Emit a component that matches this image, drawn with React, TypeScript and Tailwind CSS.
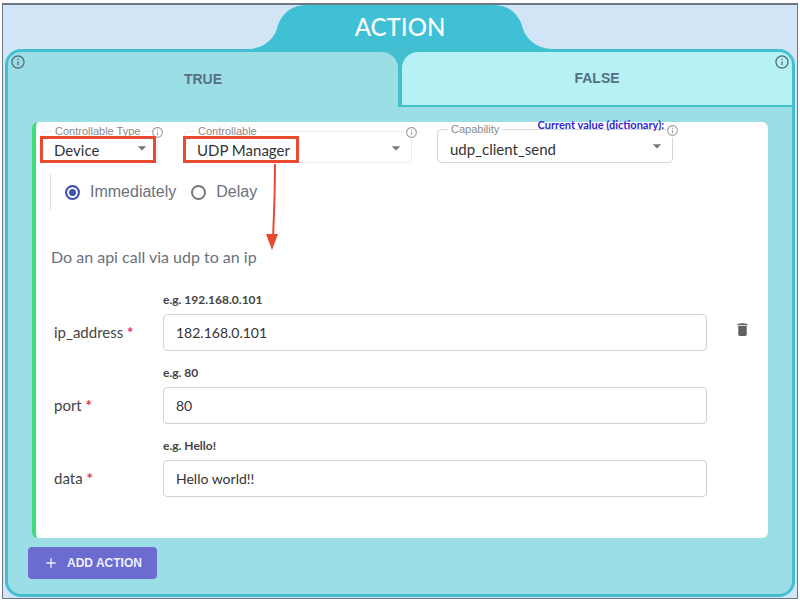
import { useState } from "react";
import type { ReactNode } from "react";
import { MdAdd, MdArrowDropDown, MdDelete, MdInfoOutline } from "react-icons/md";

type SelectFieldProps = {
  id: string;
  label: string;
  value: string;
  className: string;
  children?: ReactNode;
};

function SelectField({ id, label, value, className, children }: SelectFieldProps) {
  return (
    <div className={`relative rounded border ${className}`}>
      <label
        htmlFor={id}
        className="absolute -top-[7px] left-2.5 bg-white px-[3px] font-['Liberation_Sans',sans-serif] text-[11px] leading-3 whitespace-nowrap text-[#8a8a8a]"
      >
        {label}
      </label>
      <select
        id={id}
        defaultValue={value}
        className="h-full w-full appearance-none bg-transparent pt-1.5 pl-3 text-[15px] text-[#333] outline-none"
      >
        <option>{value}</option>
      </select>
      <MdArrowDropDown className="pointer-events-none absolute top-1.5 right-[5px] size-5 text-[#757575]" />
      <button
        type="button"
        aria-label={`About ${label}`}
        className="absolute -top-1.5 -right-[7px] rounded-full bg-white text-[#a3a3a3]"
      >
        <MdInfoOutline className="size-[13px]" />
      </button>
      {children}
    </div>
  );
}

function Highlight() {
  return (
    <div className="pointer-events-none absolute -bottom-px -left-0.5 h-[27px] w-[116px] border-3 border-[#e8492f]" />
  );
}

function Flare({ className }: { className?: string }) {
  return (
    <svg viewBox="0 0 56 44" className={`h-11 w-14 ${className ?? ""}`} aria-hidden="true">
      <path d="M0 44 C16 43 25 33 28 24 C31 11 41 0 57 0 V44 Z" fill="#3fc0d5" />
    </svg>
  );
}

const params = [
  { name: "ip_address", hint: "e.g. 192.168.0.101", value: "182.168.0.101" },
  { name: "port", hint: "e.g. 80", value: "80" },
  { name: "data", hint: "e.g. Hello!", value: "Hello world!!" },
];

export default function App() {
  const [timing, setTiming] = useState("Immediately");

  return (
    <div className="bg-white px-0.5 py-[3px] font-['Lato',sans-serif]">
      <main className="border border-t-2 border-[#6b7a86] bg-[#d1e5f6] px-0.5 pb-px">
        <header className="flex h-11 justify-center">
          <Flare />
          <h1 className="w-[190px] bg-[#3fc0d5] text-center text-2xl leading-11 font-medium text-white">
            ACTION
          </h1>
          <Flare className="-scale-x-100" />
        </header>

        <section className="overflow-hidden rounded-2xl border-3 border-[#43bfce] bg-[#9bdee5]">
          <div
            role="tablist"
            className="grid grid-cols-2 gap-1 bg-[#43bfce] font-['Liberation_Sans',sans-serif] text-sm font-bold text-[#56707f]"
          >
            <div className="relative rounded-tr-2xl bg-[#9bdee5]">
              <button type="button" role="tab" aria-selected="true" className="h-[55px] w-full pb-0.5">
                TRUE
              </button>
              <MdInfoOutline className="absolute top-0.5 left-0.5 size-4" />
            </div>
            <div className="relative rounded-tl-2xl border-b-2 border-[#43bfce] bg-[#b5f1f5]">
              <button type="button" role="tab" aria-selected="false" className="h-[53px] w-full pb-0.5">
                FALSE
              </button>
              <MdInfoOutline className="absolute top-0.5 right-0.5 size-4" />
            </div>
          </div>

          <div className="pt-[15px] pr-6 pb-[15px] pl-5">
            <article className="ml-1 rounded-md border-l-4 border-[#3fdc7c] bg-white pt-[7px] pb-[41px]">
              <div className="flex items-end pl-[5px]">
                <SelectField
                  id="type"
                  label="Controllable Type"
                  value="Device"
                  className="h-8 w-[117px] border-[#ececec]"
                >
                  <Highlight />
                </SelectField>
                <SelectField
                  id="controllable"
                  label="Controllable"
                  value="UDP Manager"
                  className="ml-[26px] h-8 w-[228px] border-[#ececec]"
                >
                  <Highlight />
                  <svg
                    viewBox="0 0 14 88"
                    className="pointer-events-none absolute top-8 left-20 h-[88px] w-3.5"
                    aria-hidden="true"
                  >
                    <path d="M10 0 C10 30 9 50 8 74" fill="none" stroke="#e8492f" strokeWidth="2" />
                    <path d="M1 70 L13 70 L7 86 Z" fill="#e8492f" />
                  </svg>
                </SelectField>
                <SelectField
                  id="capability"
                  label="Capability"
                  value="udp_client_send"
                  className="ml-[25px] h-[34px] w-[236px] border-[#d6d6d6]"
                >
                  <span className="absolute -top-[13px] right-2 text-[11px] leading-4 font-bold whitespace-nowrap text-[#3026d2]">
                    Current value (dictionary):
                  </span>
                </SelectField>
              </div>

              <div className="mt-[11px] ml-3.5 flex h-9 items-center gap-[15px] border-l border-[#dedede] pl-3.5 font-['Liberation_Sans',sans-serif] text-base text-[#6b717d]">
                {["Immediately", "Delay"].map((option) => (
                  <label key={option} className="flex items-center gap-2.5">
                    <input
                      type="radio"
                      name="timing"
                      checked={timing === option}
                      onChange={() => setTiming(option)}
                      className="size-[15px] appearance-none rounded-full border-2 border-[#777] bg-white checked:border-[#3f51b5] checked:bg-[#3f51b5] checked:shadow-[inset_0_0_0_2px_white]"
                    />
                    {option}
                  </label>
                ))}
              </div>

              <p className="mt-[35px] ml-[15px] text-base leading-6 text-[#6b717d]">
                Do an api call via udp to an ip
              </p>

              <div className="mt-[23px] flex pl-[18px]">
                <div className="flex flex-1 flex-col gap-3.5">
                  {params.map(({ name, hint, value }) => (
                    <div key={name} className="grid grid-cols-[109px_1fr]">
                      <p className="col-start-2 h-[22px] text-xs leading-4 font-bold text-[#444]">
                        {hint}
                      </p>
                      <label htmlFor={name} className="self-center pb-0.5 text-[15px] leading-5 text-[#444]">
                        {name} <span className="font-bold text-[#e0344a]">*</span>
                      </label>
                      <input
                        id={name}
                        defaultValue={value}
                        className="h-[37px] w-full min-w-0 rounded border border-[#d2d2d2] px-3 text-sm text-[#333] outline-none"
                      />
                    </div>
                  ))}
                </div>
                <button
                  type="button"
                  aria-label="Delete action"
                  className="mt-[29px] mr-[17px] ml-[27px] self-start text-[#616161]"
                >
                  <MdDelete className="size-[17px]" />
                </button>
              </div>
            </article>

            <button
              type="button"
              className="mt-[9px] flex h-8 items-center gap-2 rounded bg-[#6b6bd0] px-[15px] font-['Liberation_Sans',sans-serif] text-xs font-bold text-[#eef0ff]"
            >
              <MdAdd className="size-4" />
              ADD ACTION
            </button>
          </div>
        </section>
      </main>
    </div>
  );
}
